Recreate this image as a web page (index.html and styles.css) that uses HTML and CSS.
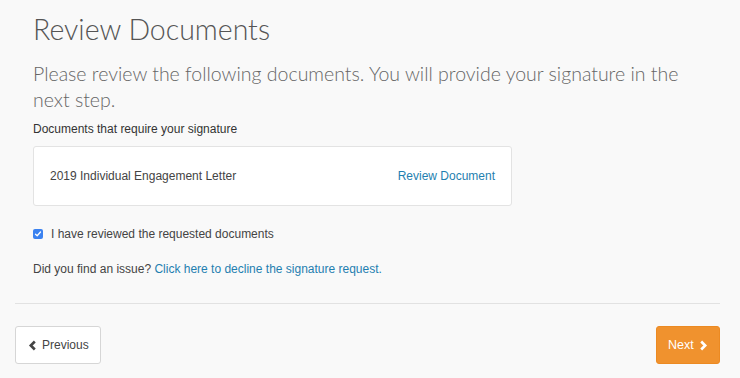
FILE: index.html
```html
<!DOCTYPE html>
<html>
<head>
<meta charset="utf-8">
<link rel="stylesheet" href="styles.css">
</head>
<body>
<div class="page">
  <div class="content">
    <h1 class="title">Review Documents</h1>
    <p class="lead">Please review the following documents. You will provide your signature in the next step.</p>
    <div class="label">Documents that require your signature</div>
    <div class="card">
      <span class="doc-name">2019 Individual Engagement Letter</span>
      <a class="link" href="#">Review Document</a>
    </div>
    <label class="check-row">
      <span class="checkbox"><svg width="8" height="8" viewBox="0 0 8 8"><path d="M1.5 4.2 L3.2 5.8 L6.5 2" fill="none" stroke="#fff" stroke-width="1.3" stroke-linecap="round" stroke-linejoin="round"/></svg></span>
      <span>I have reviewed the requested documents</span>
    </label>
    <div class="issue">Did you find an issue? <a class="link" href="#">Click here to decline the signature request.</a></div>
  </div>
  <div class="footer">
    <button class="btn btn-prev"><svg width="9" height="11" viewBox="0 0 9 11"><path d="M6.8 1.5 L2.8 5.5 L6.8 9.5" fill="none" stroke="#444" stroke-width="2.6" stroke-linejoin="miter"/></svg>Previous</button>
    <button class="btn btn-next">Next<svg width="9" height="11" viewBox="0 0 9 11"><path d="M2.2 1.5 L6.2 5.5 L2.2 9.5" fill="none" stroke="#fff" stroke-width="2.6" stroke-linejoin="miter"/></svg></button>
  </div>
</div>
</body>
</html>
```

FILE: styles.css
```css
html, body {
  margin: 0;
  padding: 0;
  background: #f9f9f9;
}
body {
  font-family: "Liberation Sans", Arial, sans-serif;
  color: #333;
  width: 740px;
  height: 378px;
  overflow: hidden;
}
.page {
  padding: 0 20px 0 15px;
}
.content {
  padding: 12px 0 0 18px;
}
.title {
  margin: 0;
  font-family: Lato, "Open Sans", sans-serif;
  font-weight: 300;
  font-size: 28.5px;
  line-height: 34px;
  color: #555;
}
.lead {
  margin: 15px 0 0;
  font-family: Lato, "Open Sans", sans-serif;
  font-weight: 300;
  font-size: 19.5px;
  line-height: 26px;
  color: #666;
  width: 680px;
}
.label {
  margin-top: 8px;
  font-size: 12px;
  line-height: 16px;
  color: #333;
}
.card {
  margin-top: 9px;
  width: 445px;
  height: 58px;
  background: #fff;
  border: 1px solid #e3e3e3;
  border-radius: 3px;
  display: flex;
  align-items: center;
  justify-content: space-between;
  padding: 0 16px;
  font-size: 12px;
  color: #444;
}
.link {
  color: #1f7fb0;
  text-decoration: none;
}
.check-row {
  display: flex;
  align-items: center;
  gap: 8px;
  margin-top: 20px;
  font-size: 12px;
  color: #444;
  line-height: 16px;
}
.checkbox {
  width: 10px;
  height: 10px;
  border-radius: 2px;
  background: #3b82f0;
  display: flex;
  align-items: center;
  justify-content: center;
}
.issue {
  margin-top: 19px;
  font-size: 12px;
  line-height: 16px;
  color: #444;
}
.footer {
  margin-top: 26px;
  border-top: 1px solid #e2e2e2;
  padding-top: 22px;
  display: flex;
  justify-content: space-between;
}
.btn {
  font-family: "Liberation Sans", Arial, sans-serif;
  font-size: 12px;
  height: 38px;
  border-radius: 3px;
  display: flex;
  align-items: center;
  gap: 5px;
  cursor: pointer;
}
.btn-prev {
  width: 86px;
  background: #fff;
  border: 1px solid #d6d6d6;
  color: #444;
  padding: 0 0 0 12px;
}
.btn-next {
  width: 64px;
  background: #f0922e;
  border: 1px solid #ec8a22;
  color: #fff;
  padding: 0 0 0 11px;
  font-size: 12.5px;
}
```
